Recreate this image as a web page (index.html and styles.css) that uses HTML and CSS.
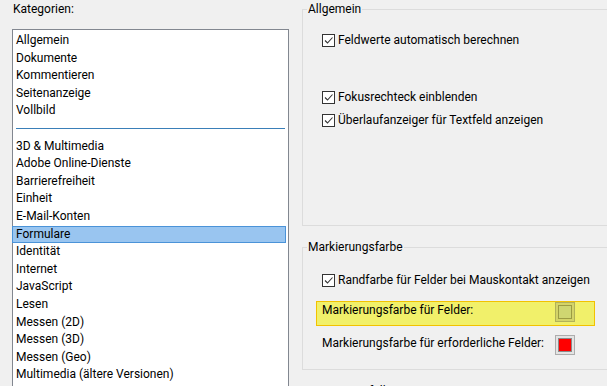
FILE: index.html
```html
<!DOCTYPE html>
<html lang="de">
<head>
    <meta charset="UTF-8">
    <meta name="viewport" content="width=device-width, initial-scale=1.0">
    <title>Voreinstellungen - Formulare</title>
    <link rel="stylesheet" href="styles.css">
</head>
<body>
    <div class="dialog">

        <div class="categories">
            <div class="caption">Kategorien:</div>
            <ul class="listbox">
                <li>Allgemein</li>
                <li>Dokumente</li>
                <li>Kommentieren</li>
                <li>Seitenanzeige</li>
                <li>Vollbild</li>
                <li class="separator"></li>
                <li>3D &amp; Multimedia</li>
                <li>Adobe Online-Dienste</li>
                <li>Barrierefreiheit</li>
                <li>Einheit</li>
                <li>E-Mail-Konten</li>
                <li class="selected">Formulare</li>
                <li>Identität</li>
                <li>Internet</li>
                <li>JavaScript</li>
                <li>Lesen</li>
                <li>Messen (2D)</li>
                <li>Messen (3D)</li>
                <li>Messen (Geo)</li>
                <li>Multimedia (ältere Versionen)</li>
            </ul>
        </div>

        <div class="settings">
            <fieldset class="group group-general">
                <legend>Allgemein</legend>
                <label class="check">
                    <span class="box"><svg viewBox="0 0 11 11"><path d="M2 5.5 L4.5 8 L9.5 2.5"/></svg></span>
                    Feldwerte automatisch berechnen
                </label>
                <label class="check check-spaced">
                    <span class="box"><svg viewBox="0 0 11 11"><path d="M2 5.5 L4.5 8 L9.5 2.5"/></svg></span>
                    Fokusrechteck einblenden
                </label>
                <label class="check">
                    <span class="box"><svg viewBox="0 0 11 11"><path d="M2 5.5 L4.5 8 L9.5 2.5"/></svg></span>
                    Überlaufanzeiger für Textfeld anzeigen
                </label>
            </fieldset>

            <fieldset class="group group-highlight">
                <legend>Markierungsfarbe</legend>
                <label class="check">
                    <span class="box"><svg viewBox="0 0 11 11"><path d="M2 5.5 L4.5 8 L9.5 2.5"/></svg></span>
                    Randfarbe für Felder bei Mauskontakt anzeigen
                </label>
                <div class="color-row marked">
                    <span>Markierungsfarbe für Felder:</span>
                    <span class="swatch swatch-field"><span></span></span>
                </div>
                <div class="color-row">
                    <span>Markierungsfarbe für erforderliche Felder:</span>
                    <span class="swatch swatch-required"><span></span></span>
                </div>
            </fieldset>

            <fieldset class="group group-autofill">
                <legend>Autom. ausfüllen</legend>
            </fieldset>
        </div>

    </div>
</body>
</html>
```

FILE: styles.css
```css
html, body {
    margin: 0;
    padding: 0;
    height: 100%;
    overflow: hidden;
}

body {
    background-color: #f0f0f0;
    color: #000;
    font-family: Roboto, "Noto Sans", sans-serif;
    font-size: 12px;
    line-height: 17.5px;
}

.dialog {
    display: flex;
    align-items: flex-start;
}

/* left column */

.categories {
    padding: 1px 0 0 12px;
    flex: none;
}

.caption {
    padding-left: 1px;
    margin-bottom: 10.5px;
}

.listbox {
    list-style: none;
    margin: 0;
    padding: 2px 0 0 0;
    width: 275px;
    height: 400px;
    background: #fff;
    border: 1px solid #828790;
}

.listbox li {
    padding-left: 3px;
    height: 17.6px;
    white-space: nowrap;
}

.listbox li.selected {
    background: #99c5f0;
    border: 1px solid #4b93d8;
    margin-left: -1px;
    margin-right: 2px;
    padding-left: 3px;
    height: 15.6px;
    line-height: 15.6px;
}

.listbox li.separator {
    padding: 8px 3px 0 3px;
    height: 9.6px;
}

.listbox li.separator::before {
    content: "";
    display: block;
    height: 1px;
    background: #3a7fb8;
}

/* right column */

.settings {
    flex: none;
    margin-left: 13px;
    padding-top: 1px;
}

.group {
    margin: 0;
    padding: 0;
    width: 330px;
    box-sizing: border-box;
    border: 1px solid #dcdcdc;
    min-width: 0;
}

.group legend {
    margin-left: 4px;
    padding: 0 1px;
}

.group-general {
    height: 225px;
    padding-top: 13.5px;
}

.group-highlight {
    margin-top: 13px;
    padding: 15px 0 11px 0;
}

.group-autofill {
    margin-top: 13px;
    height: 60px;
}

.check {
    display: flex;
    align-items: center;
    gap: 3px;
    padding-left: 19px;
    white-space: nowrap;
}

.check + .check {
    margin-top: 6px;
}

.check.check-spaced {
    margin-top: 39px;
}

.box {
    width: 11px;
    height: 11px;
    border: 1px solid #333;
    background: #fff;
    display: inline-flex;
}

.box svg {
    width: 11px;
    height: 11px;
    fill: none;
    stroke: #333;
    stroke-width: 1.1;
}

.color-row {
    display: flex;
    align-items: flex-start;
    justify-content: space-between;
    margin-left: 13px;
    width: 253px;
    padding: 1px 19px 2px 5px;
    border: 1px solid transparent;
    white-space: nowrap;
}

.color-row + .color-row {
    margin-top: 7px;
}

.color-row.marked {
    margin-top: 12px;
    background: #f1f06a;
    border-color: #f2c200;
    padding-top: 0;
    padding-bottom: 3px;
}

.swatch {
    width: 14px;
    height: 14px;
    padding: 2px;
    border: 1px solid #adadad;
    background: #e3e3e3;
    display: inline-flex;
    flex: none;
}

.swatch span {
    flex: 1;
    border: 1px solid #8a8a8a;
}

.swatch-required span {
    background: #ff0000;
}

.swatch-field {
    border-color: #b2b258;
    background: #d4d468;
}

.swatch-field span {
    background: #cfd671;
    border-color: #9c9c42;
}
```
